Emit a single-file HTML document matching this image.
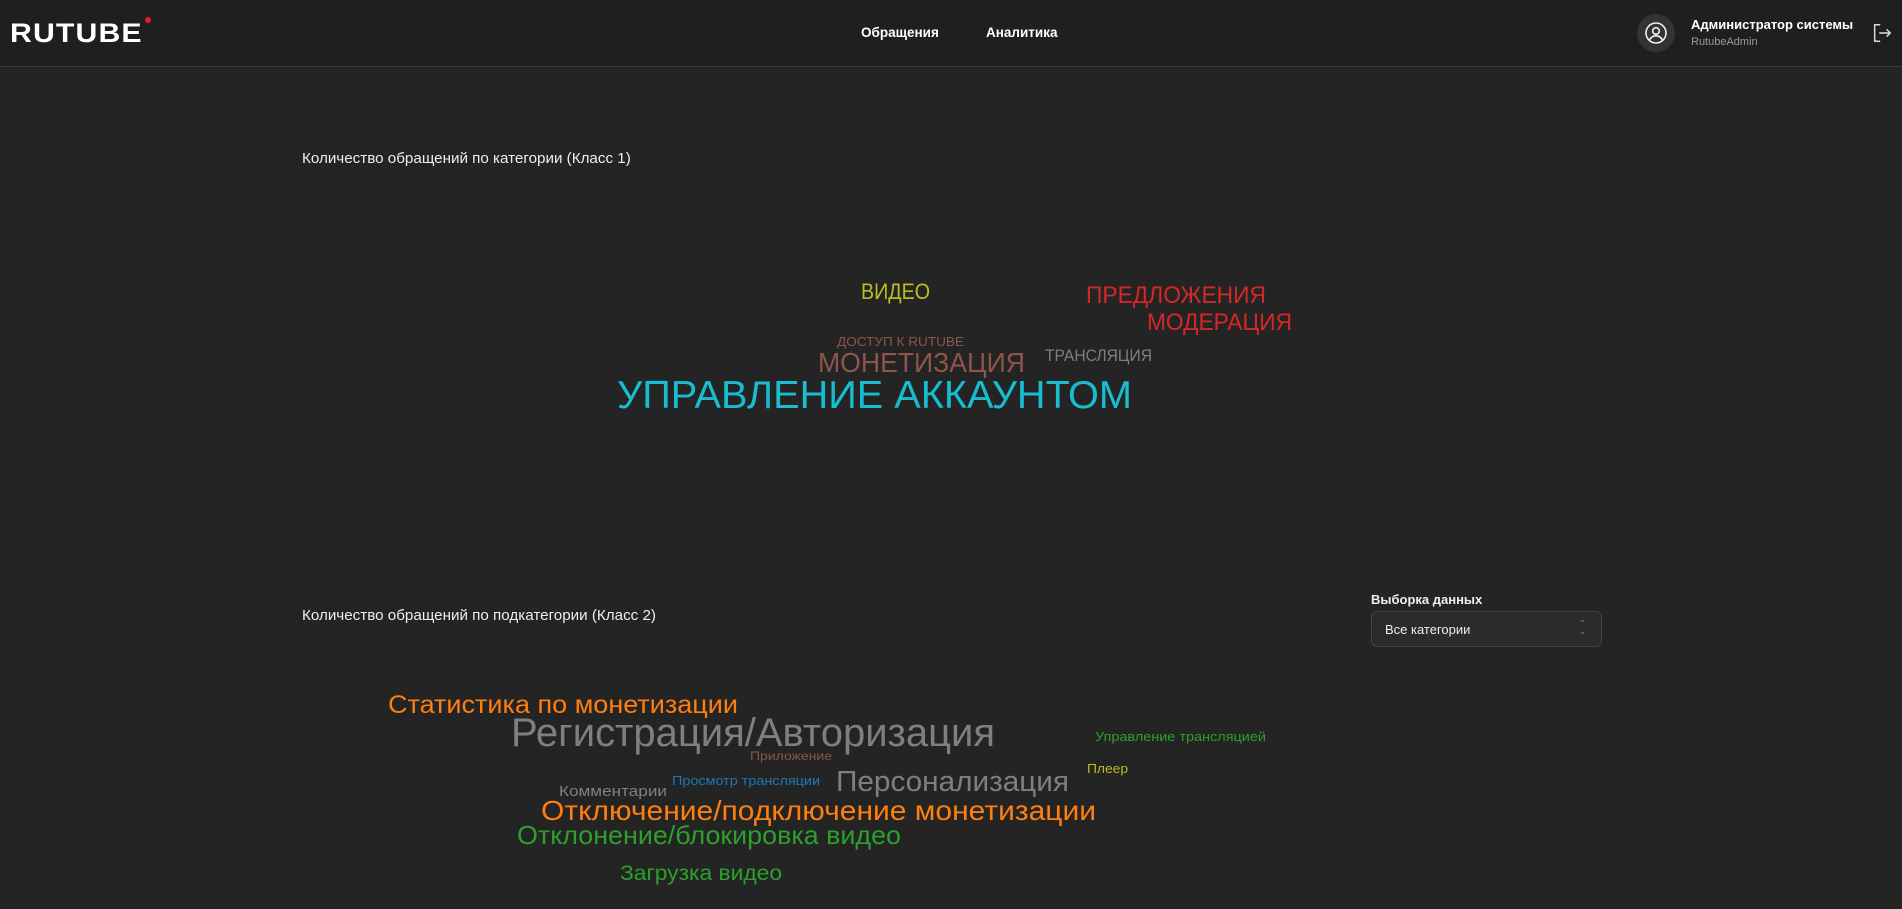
<!DOCTYPE html>
<html><head><meta charset="utf-8"><style>
*{margin:0;padding:0;box-sizing:border-box}
body{width:1902px;height:909px;background:#242424;font-family:"Liberation Sans","Noto Sans CJK SC",sans-serif;overflow:hidden;position:relative;color:#eee}
.hdr{position:absolute;left:0;top:0;width:1902px;height:67px;background:#1f1f1f;border-bottom:1px solid #3c3c3c}
.abs{position:absolute;white-space:nowrap}
</style></head><body>
<div class="hdr"></div>
<div class="abs" style="left:10px;top:18px;font-size:27px;font-weight:bold;color:#fff;letter-spacing:1px;transform:scaleX(1.12);transform-origin:left">RUTUBE</div>
<div class="abs" style="left:145px;top:17px;width:6px;height:6px;border-radius:50%;background:#e8173a"></div>
<div class="abs" style="left:861px;top:25px;font-size:13.5px;font-weight:bold;color:#fff">Обращения</div>
<div class="abs" style="left:986px;top:25px;font-size:13.5px;font-weight:bold;color:#fff">Аналитика</div>
<div class="abs" style="left:1637px;top:14px;width:38px;height:38px;border-radius:50%;background:#333"></div>
<svg class="abs" style="left:1644px;top:21px" width="24" height="24" viewBox="0 0 24 24" fill="none" stroke="#eee" stroke-width="1.6"><circle cx="12" cy="12" r="10"/><circle cx="12" cy="10" r="3.3"/><path d="M5.5 19c1.5-3 4-4.2 6.5-4.2s5 1.2 6.5 4.2"/></svg>
<div class="abs" style="left:1691px;top:17px;font-size:13px;font-weight:bold;color:#fff">Администратор системы</div>
<div class="abs" style="left:1691px;top:36px;font-size:11px;color:#999">RutubeAdmin</div>
<svg class="abs" style="left:1871px;top:22px" width="22" height="22" viewBox="0 0 24 24" fill="none" stroke="#ddd" stroke-width="1.6"><path d="M10 3H4v18h6M9 12h12M17 8l4 4-4 4"/></svg>
<div class="abs" style="left:302px;top:150px;font-size:15.2px;color:#eee">Количество обращений по категории (Класс 1)</div>
<div class="abs" style="left:302px;top:607px;font-size:15.2px;color:#eee">Количество обращений по подкатегории (Класс 2)</div>
<div class="abs" style="left:1371px;top:592px;font-size:13px;font-weight:bold;color:#eee">Выборка данных</div>
<div class="abs" style="left:1371px;top:611px;width:231px;height:36px;border:1px solid #444;border-radius:6px;background:#2b2b2b"></div>
<div class="abs" style="left:1385px;top:622px;font-size:13px;color:#eee">Все категории</div>
<div class="abs" style="left:1579px;top:620px;font-size:8px;color:#888;line-height:8px">&#8963;<br>&#8964;</div>
<svg class="abs" style="left:0;top:0" width="1902" height="909" font-family="Liberation Sans, sans-serif">
<text x="861" y="299" font-size="22" fill="#bcbd22" textLength="69" lengthAdjust="spacingAndGlyphs">ВИДЕО</text>
<text x="1086" y="303" font-size="24" fill="#d62728" textLength="180" lengthAdjust="spacingAndGlyphs">ПРЕДЛОЖЕНИЯ</text>
<text x="1147" y="330" font-size="24" fill="#d62728" textLength="145" lengthAdjust="spacingAndGlyphs">МОДЕРАЦИЯ</text>
<text x="837" y="346" font-size="13" fill="#8c564b" textLength="127" lengthAdjust="spacingAndGlyphs">ДОСТУП К RUTUBE</text>
<text x="818" y="372" font-size="28" fill="#8c564b" textLength="207" lengthAdjust="spacingAndGlyphs">МОНЕТИЗАЦИЯ</text>
<text x="1045" y="361" font-size="16.5" fill="#7f7f7f" textLength="107" lengthAdjust="spacingAndGlyphs">ТРАНСЛЯЦИЯ</text>
<text x="617" y="408" font-size="39" fill="#17becf" textLength="515" lengthAdjust="spacingAndGlyphs">УПРАВЛЕНИЕ АККАУНТОМ</text>

<text x="388" y="713" font-size="25" fill="#ff7f0e" textLength="350" lengthAdjust="spacingAndGlyphs">Статистика по монетизации</text>
<text x="511" y="746" font-size="40" fill="#7f7f7f" textLength="484" lengthAdjust="spacingAndGlyphs">Регистрация/Авторизация</text>
<text x="1095" y="741" font-size="13" fill="#2ca02c" textLength="171" lengthAdjust="spacingAndGlyphs">Управление трансляцией</text>
<text x="750" y="760" font-size="12" fill="#8c564b" textLength="82" lengthAdjust="spacingAndGlyphs">Приложение</text>
<text x="1087" y="773" font-size="13" fill="#bcbd22" textLength="41" lengthAdjust="spacingAndGlyphs">Плеер</text>
<text x="672" y="785" font-size="13" fill="#1f77b4" textLength="148" lengthAdjust="spacingAndGlyphs">Просмотр трансляции</text>
<text x="836" y="791" font-size="29" fill="#7f7f7f" textLength="233" lengthAdjust="spacingAndGlyphs">Персонализация</text>
<text x="559" y="796" font-size="15" fill="#7f7f7f" textLength="108" lengthAdjust="spacingAndGlyphs">Комментарии</text>
<text x="541" y="820" font-size="28" fill="#ff7f0e" textLength="555" lengthAdjust="spacingAndGlyphs">Отключение/подключение монетизации</text>
<text x="517" y="844" font-size="26" fill="#2ca02c" textLength="384" lengthAdjust="spacingAndGlyphs">Отклонение/блокировка видео</text>
<text x="620" y="880" font-size="21" fill="#2ca02c" textLength="162" lengthAdjust="spacingAndGlyphs">Загрузка видео</text>
</svg>
</body></html>
